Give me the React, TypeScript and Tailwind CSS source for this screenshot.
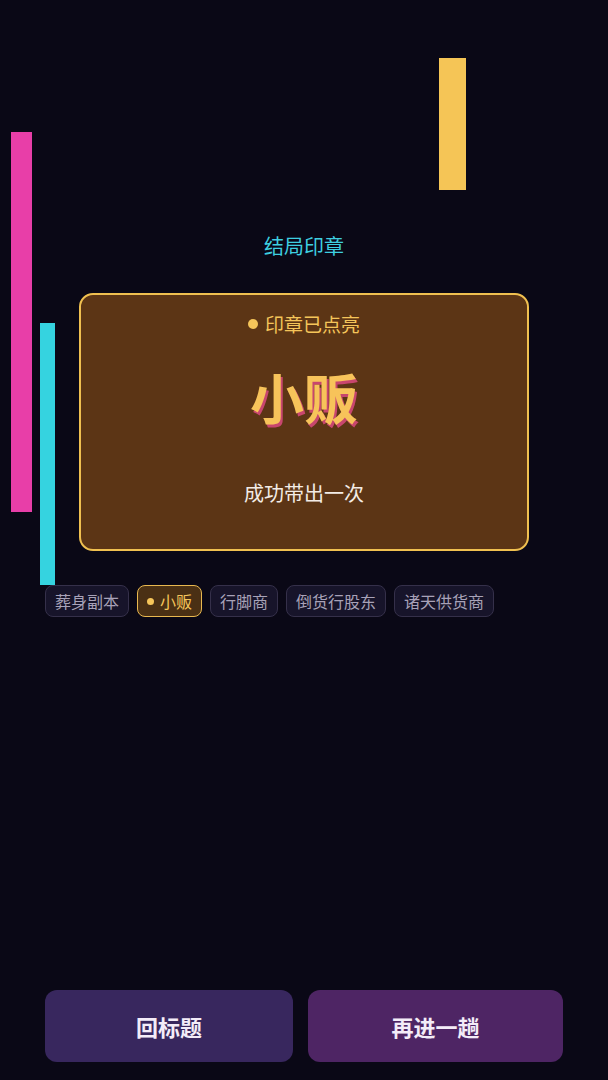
const routes = ['葬身副本', '小贩', '行脚商', '倒货行股东', '诸天供货商'];
const current = '小贩';

function RouteChip({ label, active }: { label: string; active: boolean }) {
  if (active) {
    return (
      <span className="flex h-8 items-center gap-[6px] rounded-lg border border-[#e8b850] bg-[#4a3014] px-[9px] text-[16px] text-[#f5c55a]">
        <span className="h-[7px] w-[7px] rounded-full bg-[#f5c55a]" />
        {label}
      </span>
    );
  }
  return (
    <span className="flex h-8 items-center rounded-lg border border-[#35304a] bg-[#17142a] px-[9px] text-[16px] text-[#a8a2b8]">
      {label}
    </span>
  );
}

export default function App() {
  return (
    <div className="relative flex min-h-screen w-full flex-col overflow-hidden bg-[#0a0816] px-[45px] pb-[18px] pt-[232px] font-['Noto_Sans_CJK_SC','Noto_Sans',sans-serif]">
      {/* decorative neon bars */}
      <div className="absolute left-[11px] top-[132px] h-[380px] w-[21px] bg-[#e83ea8]" />
      <div className="absolute left-[40px] top-[323px] h-[262px] w-[15px] bg-[#35d3e0]" />
      <div className="absolute left-[439px] top-[58px] h-[132px] w-[27px] bg-[#f5c556]" />

      <h1 className="text-center text-[20px] leading-7 text-[#3ecfe0]">结局印章</h1>

      <div className="relative mx-auto mt-[33px] flex h-[258px] w-[450px] flex-col items-center rounded-[14px] border-2 border-[#f0c050] bg-[#5c3515] pt-[16px]">
        <div className="flex items-center gap-[7px] text-[19px] leading-[26px] text-[#f5c55a]">
          <span className="h-[10px] w-[10px] rounded-full bg-[#f5c55a]" />
          印章已点亮
        </div>
        <div className="mt-[28px] text-[54px] font-bold leading-[64px] text-[#f7c35a] [text-shadow:2px_3px_0_#c8466e]">
          小贩
        </div>
        <div className="mt-[50px] text-[20px] leading-7 text-[#f3ece6]">成功带出一次</div>
      </div>

      <div className="relative mt-[34px] flex flex-wrap gap-2">
        {routes.map((r) => (
          <RouteChip key={r} label={r} active={r === current} />
        ))}
      </div>

      <div className="mt-auto flex gap-[15px]">
        <button className="h-[72px] w-[248px] rounded-xl bg-[#38275e] text-[22px] font-bold text-[#f3ecf8]">回标题</button>
        <button className="h-[72px] flex-1 rounded-xl bg-[#4e2564] text-[22px] font-bold text-[#f3ecf8]">再进一趟</button>
      </div>
    </div>
  );
}
